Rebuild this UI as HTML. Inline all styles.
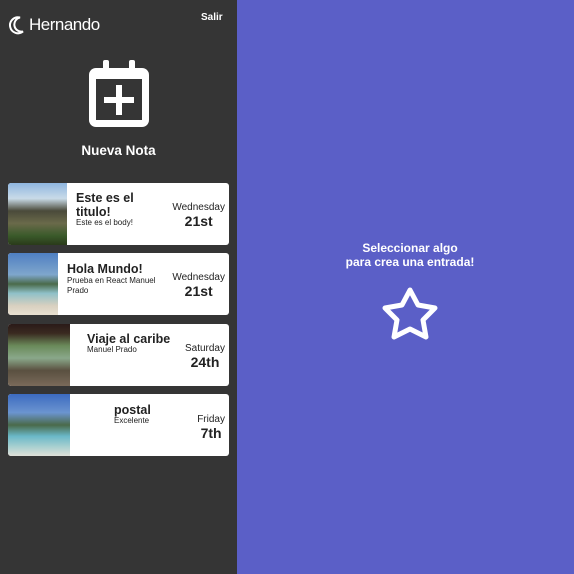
<!DOCTYPE html>
<html><head><meta charset="utf-8"><style>
*{margin:0;padding:0;box-sizing:border-box}
body{width:574px;height:574px;overflow:hidden;font-family:"Liberation Sans",Arial,sans-serif;background:#5b5fc7;position:relative}
.side{position:absolute;left:0;top:0;width:237px;height:574px;background:#353535;color:#fff}
.name{position:absolute;left:8px;top:15px;font-size:17px;display:flex;align-items:center;gap:3px;letter-spacing:-0.5px}
.salir{position:absolute;left:201px;top:12px;font-size:10px;font-weight:bold}
.nn{position:absolute;left:0;width:237px;top:143px;text-align:center;font-size:13.5px;font-weight:bold}
.card{position:absolute;left:8px;width:221px;height:62px;background:#fff;border-radius:3px;overflow:hidden;color:#222}
.img{position:absolute;left:0;top:0;height:62px}
.t{position:absolute;font-size:12.5px;font-weight:bold;line-height:14px}
.b{position:absolute;font-size:8px;line-height:10px}
.d{position:absolute;right:4px;text-align:center;font-size:10px;line-height:11px}
.d b{display:block;font-size:14px;line-height:16px}
.msg{position:absolute;left:330px;width:160px;top:241px;text-align:center;color:#fff;font-size:12px;font-weight:bold;line-height:14px}
</style></head><body>
<div class="side">
<div class="name"><svg width="18" height="20" viewBox="0 0 18 20"><path d="M12 2.5A8 8 0 1 0 15 16.5A7 7 0 1 1 12 2.5Z" fill="none" stroke="#fff" stroke-width="2"/></svg>Hernando</div>
<div class="salir">Salir</div>
<svg style="position:absolute;left:89px;top:60px" width="60" height="67" viewBox="0 0 60 67">
<rect x="14" y="0" width="6" height="12" rx="2" fill="#fff"/><rect x="40" y="0" width="6" height="12" rx="2" fill="#fff"/>
<rect x="0" y="8" width="60" height="59" rx="7" fill="#fff"/>
<rect x="7" y="19" width="46" height="41" fill="#353535"/>
<rect x="15" y="37" width="30" height="6" fill="#fff"/><rect x="27" y="25" width="6" height="30" fill="#fff"/>
</svg>
<div class="nn">Nueva Nota</div>

<div class="card" style="top:183px"><div class="img" style="width:59px;background:linear-gradient(#8fb6e0 0%,#c9dbe8 25%,#4a4a3a 45%,#6a6a4a 65%,#3a5a2a 85%,#2a3a1a 100%)"></div>
<div class="t" style="left:68px;top:8px">Este es el<br>titulo!</div><div class="b" style="left:68px;top:35px">Este es el body!</div>
<div class="d" style="top:19px">Wednesday<b>21st</b></div></div>

<div class="card" style="top:253px"><div class="img" style="width:50px;background:linear-gradient(#4f7fc2 0%,#7fa6cc 35%,#4a6a4a 50%,#8fc0c8 65%,#d8d0c0 85%,#e8e0d0 100%)"></div>
<div class="t" style="left:59px;top:9px">Hola Mundo!</div><div class="b" style="left:59px;top:23px">Prueba en React Manuel<br>Prado</div>
<div class="d" style="top:19px">Wednesday<b>21st</b></div></div>

<div class="card" style="top:324px"><div class="img" style="width:62px;background:linear-gradient(#2a1a18 0%,#3a2a20 15%,#6a8a5a 35%,#8aa88a 55%,#5a5040 75%,#7a6a5a 100%)"></div>
<div class="t" style="left:79px;top:8px">Viaje al caribe</div><div class="b" style="left:79px;top:21px">Manuel Prado</div>
<div class="d" style="top:19px">Saturday<b>24th</b></div></div>

<div class="card" style="top:394px"><div class="img" style="width:62px;background:linear-gradient(#3c6bc0 0%,#6b94d0 30%,#4a6a4a 50%,#6ab8c8 68%,#a8d0d0 85%,#e0e0d8 100%)"></div>
<div class="t" style="left:106px;top:9px">postal</div><div class="b" style="left:106px;top:22px">Excelente</div>
<div class="d" style="top:20px">Friday<b>7th</b></div></div>
</div>

<div class="msg">Seleccionar algo<br>para crea una entrada!</div>
<svg style="position:absolute;left:0;top:0" width="574" height="574"><path d="M410 290 L418 305 L435 308 L423 320 L426 337 L410 329 L394 337 L397 320 L385 308 L402 305 Z" fill="none" stroke="#fff" stroke-width="5" stroke-linejoin="round"/></svg>
</body></html>
